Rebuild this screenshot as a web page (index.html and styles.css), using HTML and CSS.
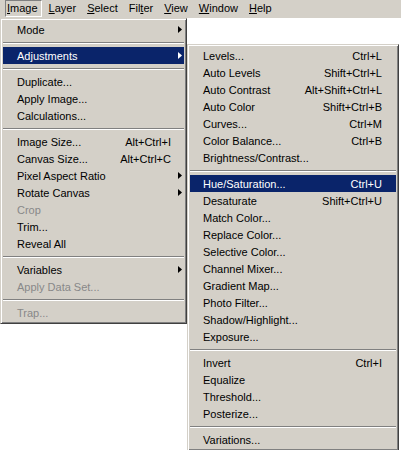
FILE: index.html
```html
<!DOCTYPE html>
<html>
<head>
<meta charset="utf-8">
<title>Image menu</title>
<link rel="stylesheet" href="styles.css">
</head>
<body>
<div class="menubar">
  <span class="mb-item active"><u>I</u>mage</span>
  <span class="mb-item"><u>L</u>ayer</span>
  <span class="mb-item"><u>S</u>elect</span>
  <span class="mb-item">Fil<u>t</u>er</span>
  <span class="mb-item"><u>V</u>iew</span>
  <span class="mb-item"><u>W</u>indow</span>
  <span class="mb-item"><u>H</u>elp</span>
</div>
<div class="menus">
  <div class="menu main">
    <div class="item"><span class="label">Mode</span><span class="arrow"><svg width="4" height="7" viewBox="0 0 4 7"><polygon points="0,0 4,3.5 0,7"/></svg></span></div>
    <div class="sep"></div>
    <div class="item hl"><span class="label">Adjustments</span><span class="arrow"><svg width="4" height="7" viewBox="0 0 4 7"><polygon points="0,0 4,3.5 0,7"/></svg></span></div>
    <div class="sep"></div>
    <div class="item"><span class="label">Duplicate...</span></div>
    <div class="item"><span class="label">Apply Image...</span></div>
    <div class="item"><span class="label">Calculations...</span></div>
    <div class="sep"></div>
    <div class="item"><span class="label">Image Size...</span><span class="key">Alt+Ctrl+I</span></div>
    <div class="item"><span class="label">Canvas Size...</span><span class="key">Alt+Ctrl+C</span></div>
    <div class="item"><span class="label">Pixel Aspect Ratio</span><span class="arrow"><svg width="4" height="7" viewBox="0 0 4 7"><polygon points="0,0 4,3.5 0,7"/></svg></span></div>
    <div class="item"><span class="label">Rotate Canvas</span><span class="arrow"><svg width="4" height="7" viewBox="0 0 4 7"><polygon points="0,0 4,3.5 0,7"/></svg></span></div>
    <div class="item dis"><span class="label">Crop</span></div>
    <div class="item"><span class="label">Trim...</span></div>
    <div class="item"><span class="label">Reveal All</span></div>
    <div class="sep"></div>
    <div class="item"><span class="label">Variables</span><span class="arrow"><svg width="4" height="7" viewBox="0 0 4 7"><polygon points="0,0 4,3.5 0,7"/></svg></span></div>
    <div class="item dis"><span class="label">Apply Data Set...</span></div>
    <div class="sep"></div>
    <div class="item dis"><span class="label">Trap...</span></div>
  </div>
  <div class="menu sub">
    <div class="item"><span class="label">Levels...</span><span class="key">Ctrl+L</span></div>
    <div class="item"><span class="label">Auto Levels</span><span class="key">Shift+Ctrl+L</span></div>
    <div class="item"><span class="label">Auto Contrast</span><span class="key">Alt+Shift+Ctrl+L</span></div>
    <div class="item"><span class="label">Auto Color</span><span class="key">Shift+Ctrl+B</span></div>
    <div class="item"><span class="label">Curves...</span><span class="key">Ctrl+M</span></div>
    <div class="item"><span class="label">Color Balance...</span><span class="key">Ctrl+B</span></div>
    <div class="item"><span class="label">Brightness/Contrast...</span></div>
    <div class="sep"></div>
    <div class="item hl"><span class="label">Hue/Saturation...</span><span class="key">Ctrl+U</span></div>
    <div class="item"><span class="label">Desaturate</span><span class="key">Shift+Ctrl+U</span></div>
    <div class="item"><span class="label">Match Color...</span></div>
    <div class="item"><span class="label">Replace Color...</span></div>
    <div class="item"><span class="label">Selective Color...</span></div>
    <div class="item"><span class="label">Channel Mixer...</span></div>
    <div class="item"><span class="label">Gradient Map...</span></div>
    <div class="item"><span class="label">Photo Filter...</span></div>
    <div class="item"><span class="label">Shadow/Highlight...</span></div>
    <div class="item"><span class="label">Exposure...</span></div>
    <div class="sep"></div>
    <div class="item"><span class="label">Invert</span><span class="key">Ctrl+I</span></div>
    <div class="item"><span class="label">Equalize</span></div>
    <div class="item"><span class="label">Threshold...</span></div>
    <div class="item"><span class="label">Posterize...</span></div>
    <div class="sep"></div>
    <div class="item"><span class="label">Variations...</span></div>
  </div>
</div>
</body>
</html>
```
FILE: styles.css
```css
* { box-sizing: border-box; }
html, body { margin: 0; padding: 0; background: #fff; }
body {
  font-family: "Liberation Sans", Arial, sans-serif;
  font-size: 11px;
  color: #000;
  width: 401px;
  height: 450px;
  overflow: hidden;
}
.menubar {
  display: flex;
  align-items: flex-start;
  height: 18px;
  background: #d4d0c8;
  padding-left: 5px;
}
.mb-item {
  height: 17px;
  line-height: 15px;
  padding: 0 3px 0 1px;
  border: 1px solid transparent;
  margin-right: 5px;
  white-space: nowrap;
}
.mb-item u { text-underline-offset: 1px; }
.mb-item.active { border-color: #808080 #fff #fff #808080; }

.menus { display: flex; align-items: flex-start; }
.menu {
  background: #d4d0c8;
  border: 1px solid;
  border-color: #d4d0c8 #404040 #404040 #d4d0c8;
  box-shadow: inset 1px 1px #fff, inset -1px -1px #808080;
  padding: 2px;
}
.main { width: 187px; }
.sub { width: 212px; margin-top: 26px; }

.item {
  display: grid;
  grid-template-columns: 1fr auto 13px;
  align-items: center;
  height: 17px;
  padding-left: 14px;
  white-space: nowrap;
}
.sub .item { padding-left: 13px; grid-template-columns: 1fr auto 14px; }
.label { grid-column: 1; }
.key { grid-column: 2; padding-left: 12px; }
.arrow { grid-column: 3; display: flex; align-items: center; padding-left: 7px; }
.arrow svg { display: block; fill: currentColor; }
.item.hl { background: #0a246a; color: #fff; }
.item.dis { color: #888; }
.sep {
  margin: 4px 0 3px;
  border-top: 1px solid #808080;
  border-bottom: 1px solid #fff;
}
```
